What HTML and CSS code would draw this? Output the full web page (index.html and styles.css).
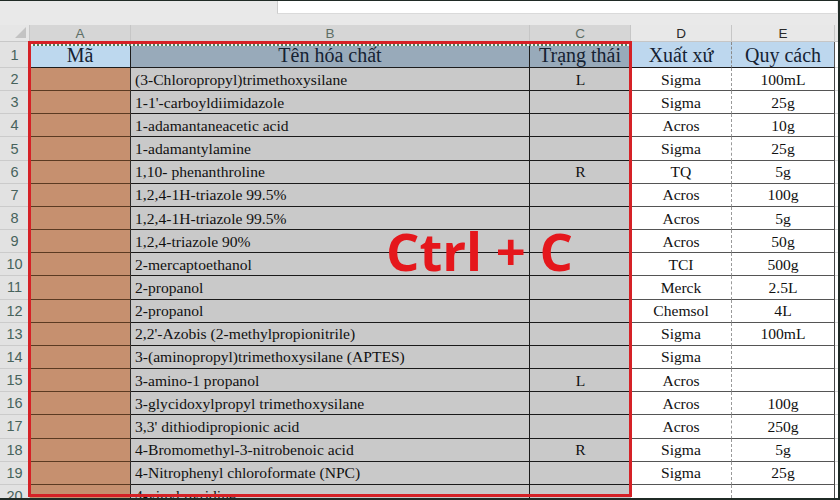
FILE: index.html
```
<!DOCTYPE html>
<html lang="vi">
<head>
<meta charset="utf-8">
<title>Sheet</title>
<link rel="stylesheet" href="styles.css">
</head>
<body>
<div class="app">
  <div class="topbar"><div class="fx"></div></div>
  <div class="grid">
    <div class="corner"><span class="tri"></span></div><div class="ch sel">A</div><div class="ch sel">B</div><div class="ch sel">C</div><div class="ch">D</div><div class="ch">E</div><div class="ch f"></div>

    <div class="rh">1</div><div class="h a1">Mã</div><div class="h bc1">Tên hóa chất</div><div class="h bc1">Trạng thái</div><div class="h de1 dash">Xuất xứ</div><div class="h de1 solid">Quy cách</div><div class="fcell"></div>

    <div class="rh">2</div><div class="a"></div><div class="b">(3-Chloropropyl)trimethoxysilane</div><div class="cl">L</div><div class="d">Sigma</div><div class="e">100mL</div><div class="fcell"></div>
    <div class="rh">3</div><div class="a"></div><div class="b">1-1'-carboyldiimidazole</div><div class="cl"></div><div class="d">Sigma</div><div class="e">25g</div><div class="fcell"></div>
    <div class="rh">4</div><div class="a"></div><div class="b">1-adamantaneacetic acid</div><div class="cl"></div><div class="d">Acros</div><div class="e">10g</div><div class="fcell"></div>
    <div class="rh">5</div><div class="a"></div><div class="b">1-adamantylamine</div><div class="cl"></div><div class="d">Sigma</div><div class="e">25g</div><div class="fcell"></div>
    <div class="rh">6</div><div class="a"></div><div class="b">1,10- phenanthroline</div><div class="cl">R</div><div class="d">TQ</div><div class="e">5g</div><div class="fcell"></div>
    <div class="rh">7</div><div class="a"></div><div class="b">1,2,4-1H-triazole 99.5%</div><div class="cl"></div><div class="d">Acros</div><div class="e">100g</div><div class="fcell"></div>
    <div class="rh">8</div><div class="a"></div><div class="b">1,2,4-1H-triazole 99.5%</div><div class="cl"></div><div class="d">Acros</div><div class="e">5g</div><div class="fcell"></div>
    <div class="rh">9</div><div class="a"></div><div class="b">1,2,4-triazole 90%</div><div class="cl"></div><div class="d">Acros</div><div class="e">50g</div><div class="fcell"></div>
    <div class="rh">10</div><div class="a"></div><div class="b">2-mercaptoethanol</div><div class="cl"></div><div class="d">TCI</div><div class="e">500g</div><div class="fcell"></div>
    <div class="rh">11</div><div class="a"></div><div class="b">2-propanol</div><div class="cl"></div><div class="d">Merck</div><div class="e">2.5L</div><div class="fcell"></div>
    <div class="rh">12</div><div class="a"></div><div class="b">2-propanol</div><div class="cl"></div><div class="d">Chemsol</div><div class="e">4L</div><div class="fcell"></div>
    <div class="rh">13</div><div class="a"></div><div class="b">2,2'-Azobis (2-methylpropionitrile)</div><div class="cl"></div><div class="d">Sigma</div><div class="e">100mL</div><div class="fcell"></div>
    <div class="rh">14</div><div class="a"></div><div class="b">3-(aminopropyl)trimethoxysilane (APTES)</div><div class="cl"></div><div class="d">Sigma</div><div class="e"></div><div class="fcell"></div>
    <div class="rh">15</div><div class="a"></div><div class="b">3-amino-1 propanol</div><div class="cl">L</div><div class="d">Acros</div><div class="e"></div><div class="fcell"></div>
    <div class="rh">16</div><div class="a"></div><div class="b">3-glycidoxylpropyl trimethoxysilane</div><div class="cl"></div><div class="d">Acros</div><div class="e">100g</div><div class="fcell"></div>
    <div class="rh">17</div><div class="a"></div><div class="b">3,3' dithiodipropionic acid</div><div class="cl"></div><div class="d">Acros</div><div class="e">250g</div><div class="fcell"></div>
    <div class="rh">18</div><div class="a"></div><div class="b">4-Bromomethyl-3-nitrobenoic acid</div><div class="cl">R</div><div class="d">Sigma</div><div class="e">5g</div><div class="fcell"></div>
    <div class="rh">19</div><div class="a"></div><div class="b">4-Nitrophenyl chloroformate (NPC)</div><div class="cl"></div><div class="d">Sigma</div><div class="e">25g</div><div class="fcell"></div>
    <div class="rh">20</div><div class="a"></div><div class="b">4-vinyl pyridine</div><div class="cl"></div><div class="d"></div><div class="e"></div><div class="fcell"></div>
  </div>
  <div class="ants"></div>
  <div class="copybox"></div>
  <div class="shortcut">Ctrl + C</div>
</div>
</body>
</html>
```

FILE: styles.css
```
* { box-sizing: border-box; }
body {
  margin: 0;
  width: 840px;
  height: 500px;
  overflow: hidden;
  background: #fff;
  font-family: "Liberation Serif", "Times New Roman", serif;
}
.app {
  position: relative;
  width: 840px;
  height: 500px;
  overflow: hidden;
  background: #fff;
}
.app::before {
  content: "";
  position: absolute;
  right: 0;
  top: 0;
  width: 2px;
  height: 500px;
  background: #1f2a25;
  z-index: 5;
}
.app::after {
  content: "";
  position: absolute;
  left: 0;
  bottom: 0;
  width: 840px;
  height: 2px;
  background: #1f2a25;
  z-index: 5;
}
.topbar {
  height: 25px;
  background: #e9e9e9;
  border-top: 1px solid #1f2a25;
}
.fx {
  margin-left: 277px;
  width: 560px;
  height: 13px;
  background: #fff;
  border-left: 1px solid #cdcdcd;
  border-bottom: 1px solid #dadada;
}
.grid {
  display: grid;
  grid-template-columns: 30px 101px 399px 101px 101px 103px 5px;
  grid-template-rows: 17px 26px repeat(19, 23.17px);
  font-size: 15.6px;
  color: #111;
}
.grid > div {
  display: flex;
  align-items: center;
  overflow: hidden;
  white-space: nowrap;
}
.corner {
  position: relative;
  background: #e6e6e6;
  border-right: 1px solid #c8c8c8;
  border-bottom: 1px solid #c8c8c8;
}
.tri {
  position: absolute;
  right: 3px;
  bottom: 3px;
  width: 0;
  height: 0;
  border-left: 11px solid transparent;
  border-bottom: 11px solid #c3c3c3;
}
.ch {
  justify-content: center;
  background: #e8e8e8;
  border-right: 1px solid #c6c6c6;
  border-bottom: 1px solid #c6c6c6;
  font-family: "Liberation Sans", Arial, sans-serif;
  font-size: 13.5px;
  color: #2a2a2a;
  padding-top: 1px;
}
.ch.sel {
  background: #d6d6d6;
  color: #5d6e66;
}
.ch.f { border-right: none; }
.rh {
  justify-content: center;
  background: #e2e2e2;
  border-right: 1px solid #c0c0c0;
  border-bottom: 1px solid #cbcbcb;
  font-family: "Liberation Sans", Arial, sans-serif;
  font-size: 14.5px;
  color: #47625c;
}
.h {
  justify-content: center;
  font-size: 20px;
  color: #152232;
  border-bottom: 1px solid #1c1c1c;
  border-right: 1px solid #1c1c1c;
  padding-top: 2px;
}
.a1 { background: #bdd8ee; }
.bc1 { background: #98aaba; }
.de1 { background: #bdd7ee; }
.h.dash { border-right: 1px dashed #8a8a8a; }
.h.solid { border-right: 1px solid #555; }
.a {
  background: #c6906f;
  border-bottom: 1px solid #5b3a22;
  border-right: 1px solid #2a2a2a;
}
.b {
  background: #c9c9c9;
  border-bottom: 1px solid #1a1a1a;
  border-right: 1px solid #1a1a1a;
  padding-left: 4px;
  padding-top: 1px;
}
.cl {
  justify-content: center;
  background: #c9c9c9;
  border-bottom: 1px solid #1a1a1a;
  padding-top: 1px;
}
.d {
  justify-content: center;
  background: #fff;
  border-bottom: 1px solid #555;
  border-right: 1px dashed #9a9a9a;
  padding-top: 1px;
}
.e {
  justify-content: center;
  background: #fff;
  border-bottom: 1px solid #555;
  border-right: 1px solid #444;
  padding-top: 1px;
}
.fcell {
  background: #fff;
  border-bottom: 1px solid #d6d6d6;
}
.copybox {
  position: absolute;
  left: 28px;
  top: 41px;
  width: 604px;
  height: 456px;
  border: 3px solid #d52126;
  z-index: 3;
}
.ants {
  position: absolute;
  left: 31px;
  top: 44px;
  width: 598px;
  height: 2px;
  background: repeating-linear-gradient(90deg, #f4f4ee 0 2px, #4f7a5d 2px 4px);
  z-index: 2;
}
.shortcut {
  position: absolute;
  left: 386px;
  top: 219px;
  font-family: "Open Sans", "Liberation Sans", sans-serif;
  font-weight: 700;
  font-size: 52.5px;
  line-height: 1.2;
  color: #e5171c;
  z-index: 4;
  white-space: nowrap;
}
```
